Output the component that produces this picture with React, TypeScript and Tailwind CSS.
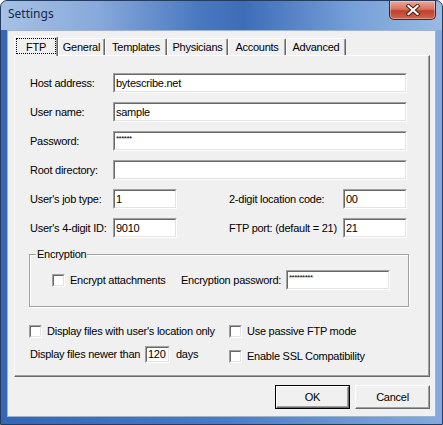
import React from "react";

const sunkenOuter =
  "border border-t-[#a0a0a0] border-l-[#a0a0a0] border-b-white border-r-white";
const sunkenInner =
  "border border-t-[#696969] border-l-[#696969] border-b-[#e3e3e3] border-r-[#e3e3e3] bg-white";

function Field({
  value = "",
  masked = false,
  className = "",
}: {
  value?: string;
  masked?: boolean;
  className?: string;
}) {
  return (
    <div className={`flex shrink-0 ${sunkenOuter} ${className}`}>
      <div className={`flex flex-1 pl-[1px] ${sunkenInner} ${masked ? "items-start" : "items-center"}`}>
        {masked ? (
          <span className="mt-[1px] text-[8px] leading-[9px] tracking-[-0.5px]">{value}</span>
        ) : (
          <span className="leading-none">{value}</span>
        )}
      </div>
    </div>
  );
}

function Check() {
  return (
    <div className={`h-[13px] w-[13px] shrink-0 ${sunkenOuter}`}>
      <div className={`h-full w-full ${sunkenInner}`} />
    </div>
  );
}

function Button({ label, isDefault = false }: { label: string; isDefault?: boolean }) {
  return (
    <div className={`flex h-[24px] w-[75px] ${isDefault ? "border border-black" : ""}`}>
      <div className="flex flex-1 items-center justify-center border border-t-white border-l-white border-b-[#696969] border-r-[#696969] bg-[#f0f0f0] shadow-[inset_-1px_-1px_0_#a0a0a0]">
        {label}
      </div>
    </div>
  );
}

const tabs = [
  { label: "General", w: "w-[47px]" },
  { label: "Templates", w: "w-[62px]" },
  { label: "Physicians", w: "w-[61px]" },
  { label: "Accounts", w: "w-[58px]" },
  { label: "Advanced", w: "w-[60px]" },
];

const tabEdge =
  "rounded-t-[2px] border-t border-l border-r border-t-white border-l-white border-r-[#696969] shadow-[inset_-1px_0_0_#a0a0a0]";

export default function App() {
  return (
    <div className="h-[425px] w-[443px] bg-white font-['Liberation_Sans',Arial,sans-serif] text-[11px] leading-[13px] tracking-[-0.25px] text-black">
      <div className="flex h-[425px] w-[443px] flex-col overflow-hidden rounded-t-[7px] border border-[#233c60] bg-[linear-gradient(90deg,#a7c1e5_0%,#87a9db_22%,#4a78c0_45%,#3e6db8_55%,#76a0d8_80%,#9bbae3_100%)]">
        {/* title bar */}
        <div className="flex h-[29px] shrink-0 items-start justify-between pl-[7px] pr-[6px]">
          <span className="mt-[5px] font-['Noto_Sans',sans-serif] text-[12px] leading-[16px] tracking-normal text-[#13294a]">
            Settings
          </span>
          <div className="flex h-[19px] w-[47px] items-center justify-center rounded-b-[5px] border border-t-0 border-[#5a1d16] bg-[linear-gradient(180deg,#e9a898_0%,#d9735f_45%,#c0412c_55%,#d2644c_100%)] shadow-[inset_0_0_0_1px_rgba(255,255,255,0.35)]">
            <svg width="16" height="12" viewBox="0 0 16 12">
              <path d="M3.5 2 L12.5 10 M12.5 2 L3.5 10" stroke="#4a1810" strokeWidth="4" strokeLinecap="square" />
              <path d="M3.5 2 L12.5 10 M12.5 2 L3.5 10" stroke="#ffffff" strokeWidth="2.2" strokeLinecap="square" />
            </svg>
          </div>
        </div>

        {/* frame body */}
        <div className="flex flex-1 bg-[linear-gradient(90deg,#3467b4_0%,#4a7bc4_50%,#86aadd_100%)] px-[6px] pb-[7px]">
          <div className="flex flex-1 flex-col border border-[#9fb3cf] bg-[#f0f0f0] pl-[6px] pr-[5px] pt-[5px]">
            {/* tab strip */}
            <div className="flex h-[19px] items-end">
              <div className={`relative z-10 -mb-[1px] flex h-[20px] w-[44px] bg-[#f0f0f0] ${tabEdge}`}>
                <div className="m-[1px] mr-[1px] flex flex-1 items-start justify-center border border-dotted border-black pt-[2px] pb-[1px] mb-[2px]">
                  FTP
                </div>
              </div>
              {tabs.map((t) => (
                <div
                  key={t.label}
                  className={`flex h-[17px] ${t.w} items-center justify-center bg-[#f0f0f0] ${tabEdge}`}
                >
                  {t.label}
                </div>
              ))}
            </div>

            {/* tab page */}
            <div className="flex h-[322px] flex-col border border-t-white border-l-white border-b-[#696969] border-r-[#696969] pl-[14px] pt-[17px] shadow-[inset_-1px_-1px_0_#a0a0a0]">
              <div className="flex w-[380px] flex-col gap-[9px]">
                {[
                  ["Host address:", "bytescribe.net", false],
                  ["User name:", "sample", false],
                  ["Password:", "******", true],
                  ["Root directory:", "", false],
                ].map(([label, value, masked]) => (
                  <div key={label as string} className="flex h-[20px] items-center">
                    <span className="w-[84px] pl-[1px]">{label}</span>
                    <Field value={value as string} masked={masked as boolean} className="h-[20px] w-[294px]" />
                  </div>
                ))}
                <div className="flex h-[20px] items-center">
                  <span className="w-[84px] pl-[1px]">User's job type:</span>
                  <Field value="1" className="h-[20px] w-[64px]" />
                  <span className="ml-[52px] w-[114px]">2-digit location code:</span>
                  <Field value="00" className="h-[20px] w-[64px]" />
                </div>
                <div className="flex h-[20px] items-center">
                  <span className="w-[84px] pl-[1px]">User's 4-digit ID:</span>
                  <Field value="9010" className="h-[20px] w-[64px]" />
                  <span className="ml-[52px] w-[114px]">FTP port: (default = 21)</span>
                  <Field value="21" className="h-[20px] w-[64px]" />
                </div>
              </div>

              {/* encryption group */}
              <div className="mt-[16px] h-[53px] w-[380px] border border-[#a0a0a0] shadow-[inset_1px_1px_0_#ffffff,1px_1px_0_#ffffff]">
                <span className="-mt-[7px] ml-[6px] block h-[13px] w-fit bg-[#f0f0f0] px-[1px]">Encryption</span>
                <div className="mt-[9px] flex h-[20px] items-center pl-[22px]">
                  <div className="flex w-[129px] items-center gap-[5px]">
                    <Check />
                    <span>Encrypt attachments</span>
                  </div>
                  <span className="w-[105px]">Encryption password:</span>
                  <Field value="*********" masked className="h-[20px] w-[104px]" />
                </div>
              </div>

              {/* options */}
              <div className="mt-[15px] flex h-[19px] w-[380px] items-center">
                <div className="flex w-[200px] items-center gap-[5px]">
                  <Check />
                  <span>Display files with user's location only</span>
                </div>
                <div className="flex items-center gap-[5px]">
                  <Check />
                  <span>Use passive FTP mode</span>
                </div>
              </div>
              <div className="mt-[4px] flex h-[19px] w-[380px] items-center">
                <div className="flex w-[200px] items-center">
                  <span className="w-[116px] pl-[1px]">Display files newer than</span>
                  <Field value="120" className="h-[17px] w-[25px]" />
                  <span className="ml-[6px]">days</span>
                </div>
                <div className="mt-[3px] flex items-center gap-[5px]">
                  <Check />
                  <span>Enable SSL Compatibility</span>
                </div>
              </div>
            </div>

            {/* buttons */}
            <div className="mt-[8px] flex justify-end gap-[5px]">
              <Button label="OK" isDefault />
              <Button label="Cancel" />
            </div>
          </div>
        </div>
      </div>
    </div>
  );
}
